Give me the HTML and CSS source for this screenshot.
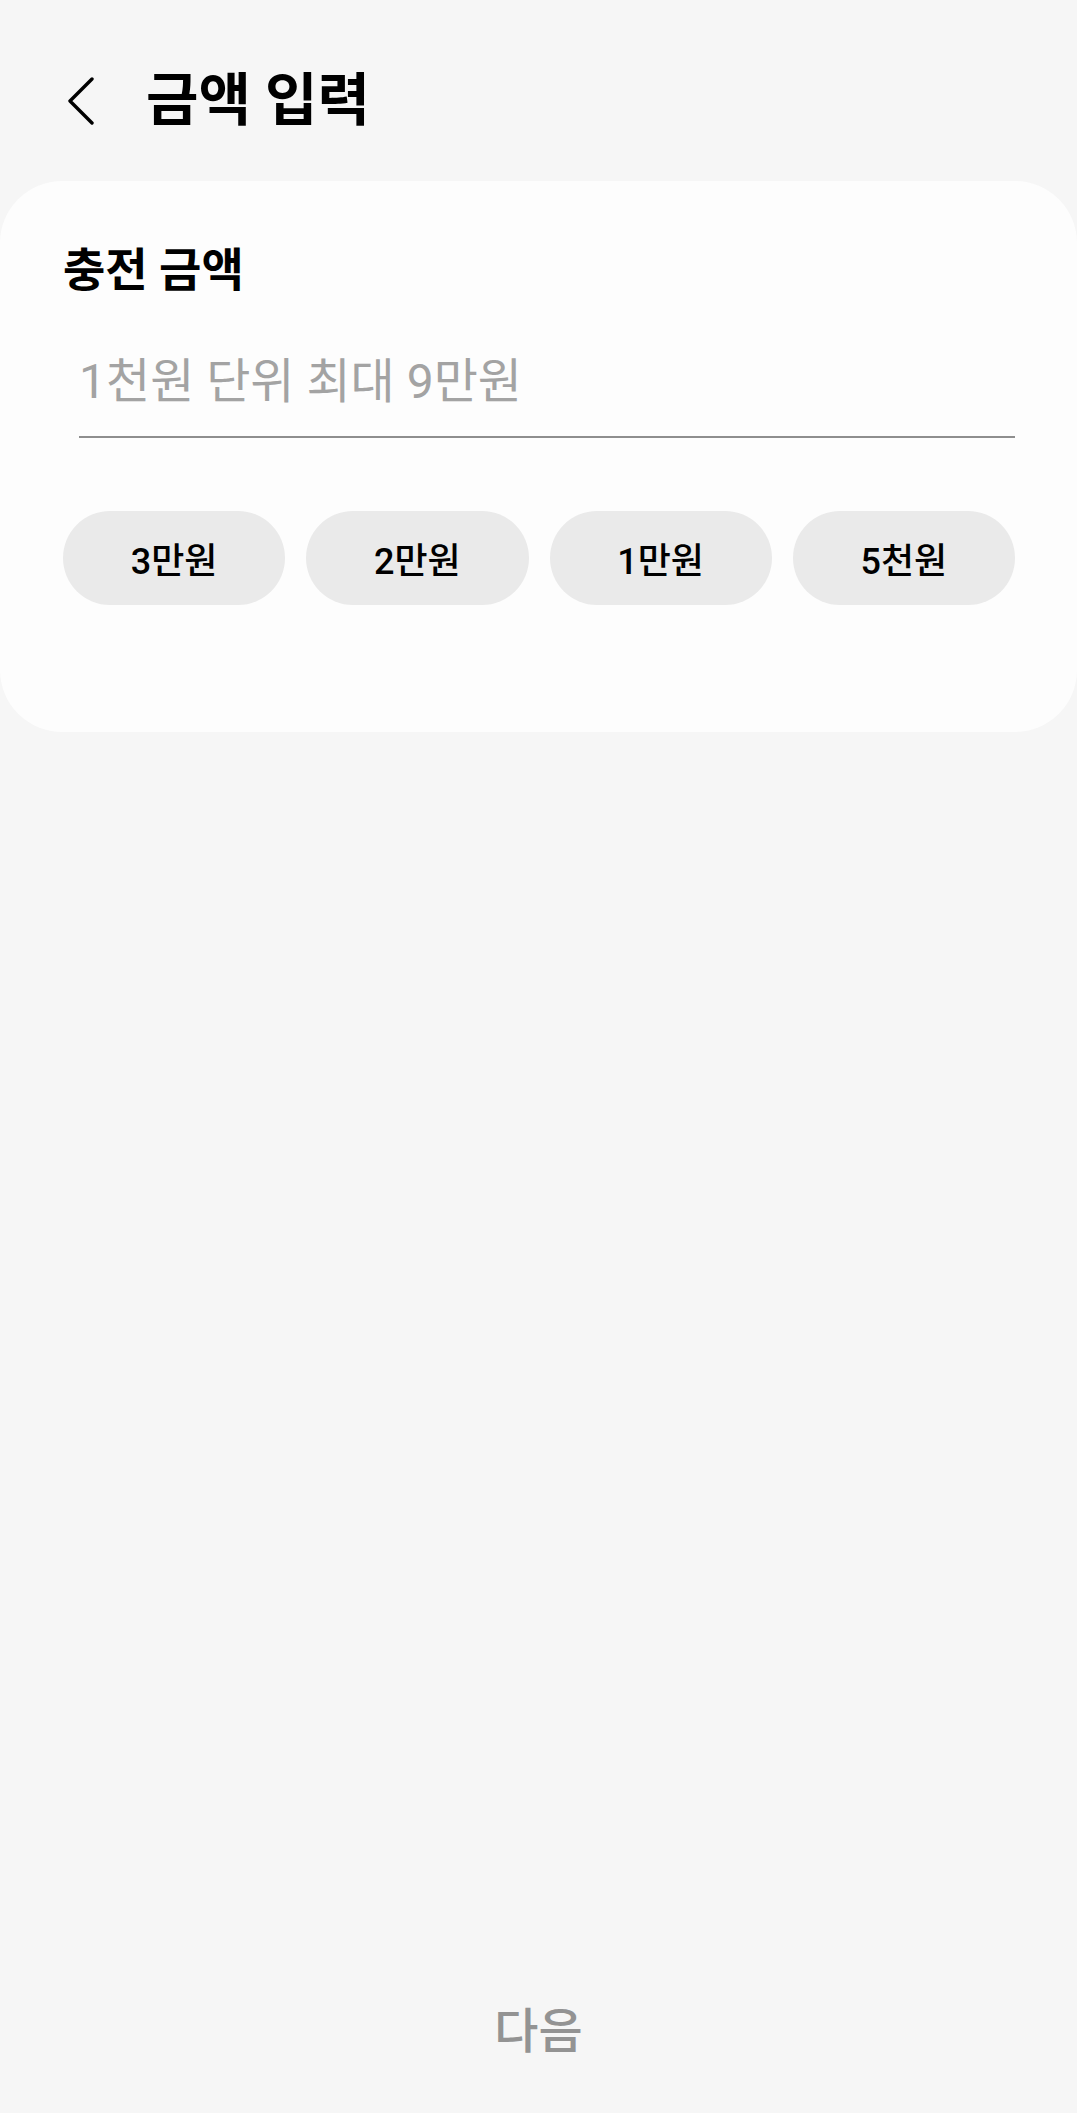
FILE: index.html
```html
<!DOCTYPE html>
<html lang="ko">
<head>
  <meta charset="utf-8">
  <link rel="stylesheet" href="styles.css">
</head>
<body>
  <div class="page">
    <header class="top-bar">
      <span class="back-btn">
        <svg width="27" height="48" viewBox="0 0 27 48">
          <path d="M25 2 L3 24 L25 46" fill="none" stroke="#000" stroke-width="3.4" stroke-linecap="round" stroke-linejoin="round" />
        </svg>
      </span>
      <h1 class="title">금액 입력</h1>
    </header>

    <section class="card">
      <h2 class="card-label">충전 금액</h2>
      <input class="amount-input" type="text" placeholder="1천원 단위 최대 9만원" />
      <div class="quick-amounts">
        <button class="chip">3만원</button>
        <button class="chip">2만원</button>
        <button class="chip">1만원</button>
        <button class="chip">5천원</button>
      </div>
    </section>

    <footer class="bottom-bar">
      <span class="next-btn">다음</span>
    </footer>
  </div>
</body>
</html>
```

FILE: styles.css
```css
body {
  margin: 0;
  background-color: #f6f6f6;
  font-family: "Roboto", "Noto Sans CJK KR", sans-serif;
}

.page {
  display: flex;
  flex-direction: column;
  min-height: 100vh;
}

.top-bar {
  display: flex;
  align-items: center;
  height: 181px;
  padding: 20px 0 0 67px;
  box-sizing: border-box;
}

.back-btn {
  display: flex;
  width: 27px;
  height: 48px;
  margin-right: 52px;
}

.title {
  margin: 0;
  font-size: 57px;
  line-height: 1;
  font-weight: 700;
  color: #000;
}

.card {
  background-color: #fdfdfd;
  border-radius: 62px;
  padding: 66px 62px 127px 63px;
}

.card-label {
  margin: 0;
  font-size: 46px;
  line-height: 1;
  font-weight: 700;
  color: #000;
}

.amount-input {
  display: block;
  width: calc(100% - 16px);
  height: 111px;
  margin: 34px 0 0 16px;
  padding: 0;
  border: none;
  border-bottom: 2px solid #8e8e8e;
  box-sizing: border-box;
  background: transparent;
  font-family: inherit;
  font-size: 48px;
  line-height: 1;
  color: #222;
}

.amount-input::placeholder {
  color: #a3a3a3;
}

.amount-input:focus {
  outline: none;
}

.quick-amounts {
  display: grid;
  grid-template-columns: repeat(4, 1fr);
  gap: 21px;
  margin-top: 73px;
}

.chip {
  height: 94px;
  border: none;
  border-radius: 47px;
  background-color: #eaeaea;
  font-family: inherit;
  font-size: 36px;
  font-weight: 500;
  color: #000;
  padding: 0;
}

.bottom-bar {
  margin-top: auto;
  display: flex;
  align-items: center;
  justify-content: center;
  height: 162px;
}

.next-btn {
  font-size: 48px;
  line-height: 1;
  font-weight: 500;
  color: #939393;
}
```
